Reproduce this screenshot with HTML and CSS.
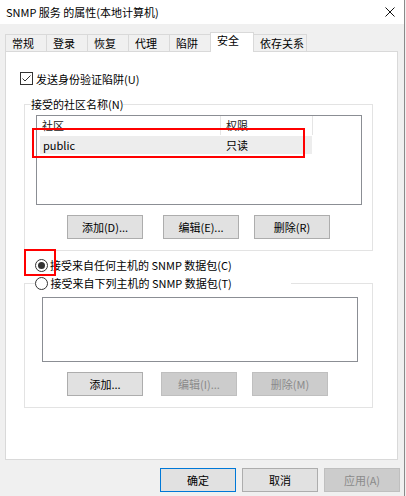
FILE: index.html
```html
<!DOCTYPE html>
<html lang="zh-CN">

<head>
    <meta charset="UTF-8">
    <meta name="viewport" content="width=device-width, initial-scale=1.0">
    <title>SNMP 服务 的属性(本地计算机)</title>
    <link rel="stylesheet" href="styles.css">
</head>

<body>

    <header class="titlebar">
        <span class="title">SNMP 服务 的属性(本地计算机)</span>
        <svg class="close" width="10" height="10" viewBox="0 0 10 10">
            <path d="M0.5 0.5 L9.5 9.5 M9.5 0.5 L0.5 9.5" stroke="#111" stroke-width="1" fill="none" />
        </svg>
    </header>

    <nav class="tabs">
        <span class="tab">常规</span>
        <span class="tab">登录</span>
        <span class="tab">恢复</span>
        <span class="tab">代理</span>
        <span class="tab">陷阱</span>
        <span class="tab active">安全</span>
        <span class="tab">依存关系</span>
    </nav>

    <main class="page">

        <label class="check-row">
            <span class="checkbox">
                <svg width="11" height="11" viewBox="0 0 11 11">
                    <path d="M1.5 5.5 L4 8 L9.5 2.5" stroke="#333" stroke-width="1" fill="none" />
                </svg>
            </span>
            发送身份验证陷阱(U)
        </label>

        <fieldset class="group group-community">
            <legend>接受的社区名称(N)</legend>

            <div class="list">
                <div class="list-head">
                    <span class="col col-name">社区</span>
                    <span class="col col-right">权限</span>
                </div>
                <div class="list-row">
                    <span class="cell cell-name">public</span>
                    <span class="cell">只读</span>
                </div>
            </div>

            <div class="btn-row">
                <button class="btn">添加(D)...</button>
                <button class="btn gap-wide">编辑(E)...</button>
                <button class="btn">删除(R)</button>
            </div>
        </fieldset>

        <label class="radio-row">
            <span class="radio checked"></span>
            接受来自任何主机的 SNMP 数据包(C)
        </label>

        <fieldset class="group group-hosts">
            <legend>
                <span class="radio"></span>
                接受来自下列主机的 SNMP 数据包(T)
            </legend>

            <div class="hosts"></div>

            <div class="btn-row">
                <button class="btn">添加...</button>
                <button class="btn gap-mid" disabled>编辑(I)...</button>
                <button class="btn" disabled>删除(M)</button>
            </div>
        </fieldset>

    </main>

    <footer class="footer">
        <button class="btn default">确定</button>
        <button class="btn">取消</button>
        <button class="btn" disabled>应用(A)</button>
    </footer>

    <!-- red annotation boxes from the screenshot -->
    <div class="mark mark-row"></div>
    <div class="mark mark-radio"></div>

</body>

</html>
```

FILE: styles.css
```css
html {
    background-color: #f0f0f0;
}

body {
    position: relative;
    margin: 0;
    width: 404px;
    height: 496px;
    border-right: 1px solid #8a8a8a;
    background-color: #f0f0f0;
    font-family: "Noto Sans CJK SC", "Liberation Sans", sans-serif;
    font-size: 11px;
    line-height: 16px;
    color: #000;
}

.titlebar {
    display: flex;
    align-items: center;
    justify-content: space-between;
    height: 24px;
    padding: 0 9px 0 6px;
    background-color: #fff;
}

.title {
    font-size: 11px;
}

.tabs {
    display: flex;
    align-items: flex-end;
    height: 19px;
    margin-top: 8px;
    padding-left: 5px;
}

.tab {
    box-sizing: border-box;
    min-width: 41px;
    height: 17px;
    padding: 0 2px 0 6px;
    line-height: 16px;
    border: 1px solid #d9d9d9;
    border-bottom: none;
    border-left: none;
    background-color: #f0f0f0;
}

.tab:first-child {
    border-left: 1px solid #d9d9d9;
    min-width: 42px;
}

.tab.active {
    position: relative;
    z-index: 1;
    min-width: 44px;
    height: 20px;
    margin-bottom: -1px;
    line-height: 15px;
    background-color: #fff;
    border-left: 1px solid #d9d9d9;
    margin-left: -1px;
}

.page {
    box-sizing: border-box;
    height: 409px;
    margin: 0 6px 0 5px;
    padding: 20px 0 0 14px;
    border: 1px solid #d9d9d9;
    background-color: #fff;
}

.check-row {
    display: flex;
    align-items: center;
    gap: 3px;
    height: 13px;
}

.checkbox {
    box-sizing: border-box;
    display: flex;
    align-items: center;
    justify-content: center;
    width: 13px;
    height: 13px;
    border: 1px solid #333;
}

.group {
    box-sizing: border-box;
    width: 349px;
    min-width: 0;
    margin: 0 0 0 4px;
    padding: 0 0 11px;
    border: 1px solid #e3e3e3;
}

.group legend {
    padding: 0;
    line-height: 16px;
}

.group-community {
    margin-top: 11px;
}

.group-community legend {
    margin-left: 6px;
}

.list {
    box-sizing: border-box;
    width: 326px;
    height: 90px;
    margin: 3px 0 0 11px;
    border: 1px solid #8b8e94;
}

.list-head {
    display: flex;
    height: 19px;
    line-height: 19px;
}

.col {
    box-sizing: border-box;
    padding-left: 5px;
    border-right: 1px solid #e5e5e5;
    color: #222;
}

.col-name {
    width: 184px;
}

.col-right {
    width: 92px;
}

.list-row {
    display: flex;
    width: 272px;
    height: 18px;
    margin: 1px 0 0 3px;
    line-height: 18px;
    background-color: #ededed;
}

.cell {
    padding-left: 3px;
}

.cell-name {
    width: 180px;
}

.btn-row {
    display: flex;
    gap: 15px;
    margin: 10px 0 0 42px;
}

.btn {
    box-sizing: border-box;
    width: 76px;
    height: 24px;
    padding: 0;
    font-family: inherit;
    font-size: 11px;
    color: #000;
    background-color: #e1e1e1;
    border: 1px solid #adadad;
}

.btn:disabled {
    color: #8a8a8a;
    background-color: #cccccc;
    border-color: #bfbfbf;
}

.btn.gap-wide {
    margin-left: 5px;
}

.btn.gap-mid {
    margin-left: 3px;
}

.radio-row {
    display: flex;
    align-items: center;
    gap: 2px;
    margin: 6px 0 0 15px;
}

.radio {
    position: relative;
    box-sizing: border-box;
    display: inline-block;
    width: 13px;
    height: 13px;
    border: 1px solid #333;
    border-radius: 50%;
    vertical-align: -2px;
}

.radio.checked::after {
    content: "";
    position: absolute;
    top: 2px;
    left: 2px;
    width: 7px;
    height: 7px;
    border-radius: 50%;
    background-color: #333;
}

.group-hosts {
    margin-top: 2px;
}

.group-hosts legend {
    width: 256px;
    margin-left: 10px;
}

.hosts {
    box-sizing: border-box;
    width: 316px;
    height: 65px;
    margin: 6px 0 0 17px;
    border: 1px solid #8b8e94;
}

.group-hosts .btn-row {
    margin-top: 10px;
}

.footer {
    display: flex;
    justify-content: flex-end;
    gap: 6px;
    margin-top: 8px;
    padding-right: 4px;
}

.footer .btn {
    height: 24px;
}

.btn.default {
    border-color: #0078d7;
}

.mark {
    position: absolute;
    box-sizing: border-box;
    border: 2px solid #ff0000;
}

.mark-row {
    left: 32px;
    top: 128px;
    width: 273px;
    height: 30px;
}

.mark-radio {
    left: 24px;
    top: 249px;
    width: 32px;
    height: 27px;
}
```
